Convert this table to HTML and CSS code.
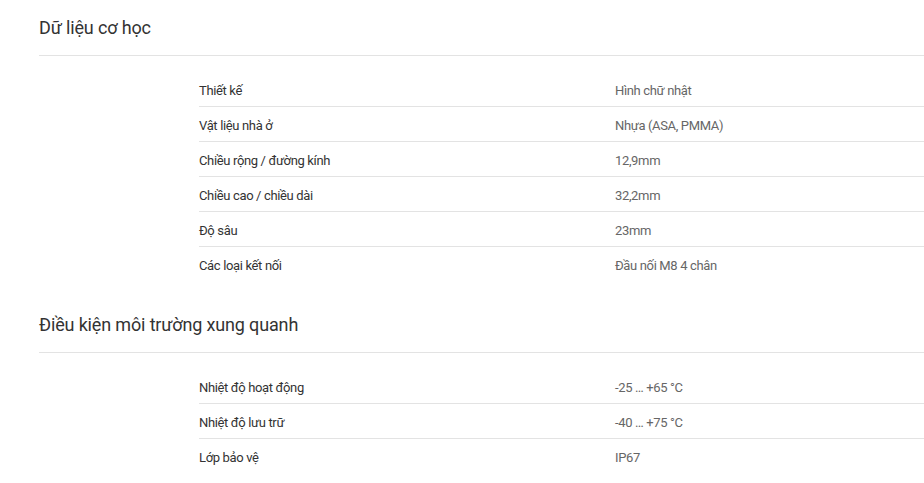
FILE: index.html
```html
<!DOCTYPE html>
<html lang="vi">
<head>
<meta charset="utf-8">
<title>Thông số</title>
<link rel="stylesheet" href="styles.css">
</head>
<body>
<section class="section">
  <h2 class="section-title">Dữ liệu cơ học</h2>
  <div class="specs">
    <div class="row"><span class="label">Thiết kế</span><span class="value">Hình chữ nhật</span></div>
    <div class="row"><span class="label">Vật liệu nhà ở</span><span class="value">Nhựa (ASA, PMMA)</span></div>
    <div class="row"><span class="label">Chiều rộng / đường kính</span><span class="value">12,9mm</span></div>
    <div class="row"><span class="label">Chiều cao / chiều dài</span><span class="value">32,2mm</span></div>
    <div class="row"><span class="label">Độ sâu</span><span class="value">23mm</span></div>
    <div class="row"><span class="label">Các loại kết nối</span><span class="value">Đầu nối M8 4 chân</span></div>
  </div>
</section>
<section class="section">
  <h2 class="section-title">Điều kiện môi trường xung quanh</h2>
  <div class="specs">
    <div class="row"><span class="label">Nhiệt độ hoạt động</span><span class="value">-25 … +65 °C</span></div>
    <div class="row"><span class="label">Nhiệt độ lưu trữ</span><span class="value">-40 … +75 °C</span></div>
    <div class="row"><span class="label">Lớp bảo vệ</span><span class="value">IP67</span></div>
  </div>
</section>
</body>
</html>
```
FILE: styles.css
```css
html, body {
  margin: 0;
  padding: 0;
  background: #fff;
}
body {
  font-family: Roboto, "Liberation Sans", sans-serif;
  color: #333;
  overflow: hidden;
}
.section {
  padding-left: 39px;
  margin-bottom: 15px;
}
.section-title {
  margin: 0;
  height: 55px;
  line-height: 55px;
  font-size: 18px;
  font-weight: 400;
  letter-spacing: -0.15px;
  color: #333;
  border-bottom: 1px solid #e3e3e3;
  white-space: nowrap;
}
.specs {
  margin: 16px 0 0 160px;
}
.row {
  display: grid;
  grid-template-columns: 416px 1fr;
  height: 35px;
  box-sizing: border-box;
  padding-top: 4px;
  line-height: 30px;
  font-size: 13px;
  letter-spacing: -0.35px;
  border-bottom: 1px solid #e3e3e3;
}
.row:last-child {
  border-bottom-color: transparent;
}
.label {
  color: #333;
}
.value {
  color: #666;
}
```
